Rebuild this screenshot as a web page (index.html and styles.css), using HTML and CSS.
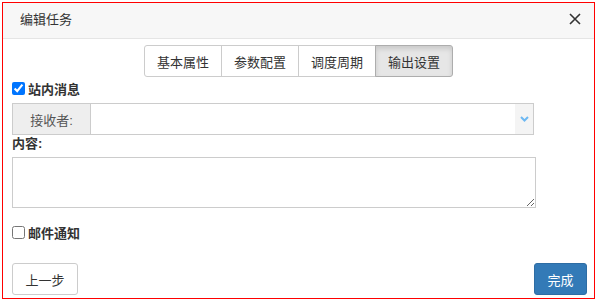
FILE: index.html
```html
<!DOCTYPE html>
<html lang="zh-CN">
<head>
  <meta charset="UTF-8">
  <title>编辑任务</title>
  <link rel="stylesheet" href="styles.css">
</head>
<body>
  <div class="modal">
    <div class="modal-header">
      <span class="modal-title">编辑任务</span>
      <button class="close-btn" type="button">
        <svg width="12" height="12" viewBox="0 0 12 12"><path d="M1 1L11 11M11 1L1 11" stroke="#333" stroke-width="1.6"/></svg>
      </button>
    </div>

    <div class="modal-body">
      <div class="tabs">
        <button class="tab" type="button">基本属性</button>
        <button class="tab" type="button">参数配置</button>
        <button class="tab" type="button">调度周期</button>
        <button class="tab active" type="button">输出设置</button>
      </div>

      <label class="check-row">
        <input type="checkbox" checked>
        <span>站内消息</span>
      </label>

      <div class="input-group">
        <span class="addon">接收者:</span>
        <div class="select-box">
          <span class="select-arrow">
            <svg width="9" height="6" viewBox="0 0 9 6"><path d="M1 1L4.5 4.5L8 1" stroke="#6db8f2" stroke-width="2" fill="none"/></svg>
          </span>
        </div>
      </div>

      <div class="field-label">内容:</div>
      <textarea class="content-box"></textarea>

      <label class="check-row mail-row">
        <input type="checkbox">
        <span>邮件通知</span>
      </label>
    </div>

    <div class="modal-footer">
      <button class="btn" type="button">上一步</button>
      <button class="btn btn-primary" type="button">完成</button>
    </div>
  </div>
</body>
</html>
```

FILE: styles.css
```css
body {
  margin: 2px;
  font-family: "Liberation Sans", "Noto Sans CJK SC", sans-serif;
  font-size: 13px;
  color: #333;
  background-color: #fff;
}

.modal {
  width: 593px;
  height: 297px;
  box-sizing: border-box;
  border: 1px solid #f00;
  display: flex;
  flex-direction: column;
}

.modal-header {
  height: 36px;
  box-sizing: border-box;
  background-color: #f7f7f7;
  border-bottom: 1px solid #e5e5e5;
  display: flex;
  align-items: center;
  justify-content: space-between;
  padding: 0 11px 4px 17px;
}

.modal-title {
  font-size: 13px;
  color: #333;
}

.close-btn {
  border: none;
  background: none;
  padding: 0;
  width: 16px;
  height: 16px;
  display: flex;
  align-items: center;
  justify-content: center;
  cursor: pointer;
}

.modal-body {
  padding: 6px 0 0 9px;
  display: flex;
  flex-direction: column;
}

.tabs {
  display: flex;
  justify-content: center;
  margin-left: -9px;
}

.tab {
  height: 32px;
  width: 78px;
  box-sizing: border-box;
  border: 1px solid #ccc;
  margin-left: -1px;
  background-color: #fff;
  font-family: inherit;
  font-size: 13px;
  color: #333;
  padding: 0;
}

.tab:first-child {
  border-radius: 3px 0 0 3px;
  margin-left: 0;
}

.tab:last-child {
  border-radius: 0 3px 3px 0;
}

.tab.active {
  background-color: #e6e6e6;
  border-color: #adadad;
  box-shadow: inset 0 3px 5px rgba(0, 0, 0, 0.125);
}

.check-row {
  display: flex;
  align-items: center;
  height: 20px;
  margin-top: 1px;
  font-weight: bold;
}

.check-row input {
  margin: 0 3px 0 0;
  width: 13px;
  height: 13px;
}

.input-group {
  display: flex;
  width: 522px;
  height: 32px;
  margin-top: 5px;
  box-sizing: border-box;
  border: 1px solid #ccc;
}

.addon {
  width: 77px;
  background-color: #eee;
  border-right: 1px solid #ccc;
  color: #555;
  display: flex;
  align-items: center;
  justify-content: center;
}

.select-box {
  flex: 1;
  display: flex;
  justify-content: flex-end;
}

.select-arrow {
  width: 18px;
  background-color: #f4f4f4;
  display: flex;
  align-items: center;
  justify-content: center;
}

.field-label {
  height: 18px;
  line-height: 18px;
  margin-top: 0;
  font-weight: bold;
}

.content-box {
  width: 524px;
  height: 51px;
  box-sizing: border-box;
  margin: 4px 0 0 0;
  border: 1px solid #ccc;
  font-family: inherit;
}

.mail-row {
  margin-top: 14px;
}

.modal-footer {
  margin-top: auto;
  padding: 0 7px 3px 9px;
  display: flex;
  justify-content: space-between;
}

.btn {
  height: 32px;
  padding: 0 12px;
  border: 1px solid #ccc;
  border-radius: 3px;
  background-color: #fff;
  font-family: inherit;
  font-size: 13px;
  color: #333;
}

.btn:first-child {
  width: 66px;
}

.btn-primary {
  width: 53px;
  background-color: #337ab7;
  border-color: #2e6da4;
  color: #fff;
}
```
